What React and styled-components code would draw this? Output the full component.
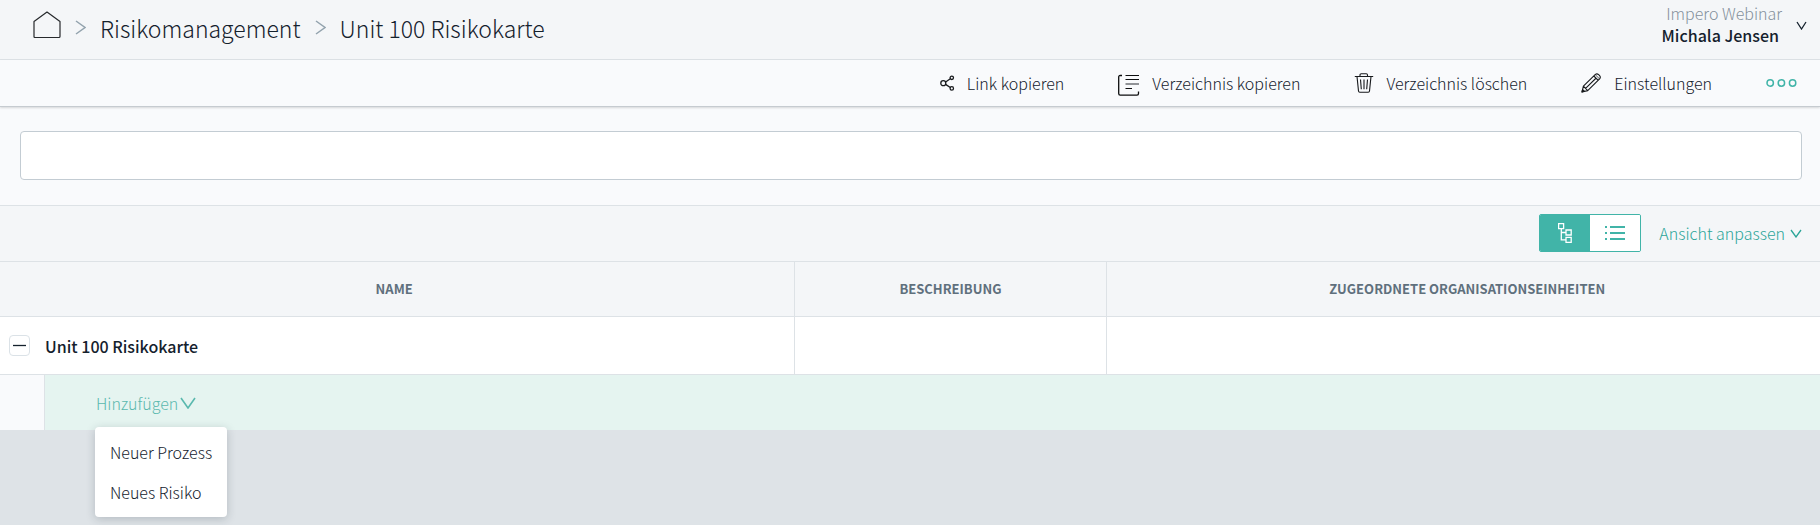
import React from "react";
import styled, { createGlobalStyle, css } from "styled-components";

const color = {
  text: "#14212d",
  muted: "#84919c",
  heading: "#5f707d",
  teal: "#41b4a8",
  tealText: "#2ba598",
  line: "#dde2e6",
  bar: "#f4f6f8",
  pale: "#f9fafc",
};

const GlobalStyle = createGlobalStyle`
  *, *::before, *::after { box-sizing: border-box; }
  body {
    margin: 0;
    min-height: 100vh;
    background: #dee3e7;
    color: ${color.text};
    font-family: "Noto Sans CJK SC", "Noto Sans", sans-serif;
    font-size: 16px;
    font-weight: 300;
    line-height: 22px;
  }
  button { font: inherit; color: inherit; background: none; border: 0; padding: 0; cursor: pointer; }
  a { color: inherit; text-decoration: none; }
  svg { display: block; flex: none; }
`;

const Header = styled.header`
  display: flex;
  align-items: center;
  justify-content: space-between;
  height: 60px;
  padding: 0 13px 0 33px;
  background: ${color.bar};
  border-bottom: 1px solid ${color.line};
`;

const Breadcrumb = styled.nav`
  display: flex;
  align-items: center;
  gap: 14px;
  padding-bottom: 4px;
  font-size: 23px;
  line-height: 32px;
`;

const UserButton = styled.button`
  display: flex;
  align-items: center;
  gap: 14px;
  padding-bottom: 12px;
  text-align: right;
`;

const UserLines = styled.span`
  display: flex;
  flex-direction: column;
`;

const Organisation = styled.span`
  color: ${color.muted};
`;

const UserName = styled.span`
  padding-right: 3px;
  font-weight: 500;
`;

const UserChevron = styled.span`
  padding-top: 4px;
`;

const Toolbar = styled.div`
  position: relative;
  display: flex;
  align-items: center;
  justify-content: flex-end;
  gap: 54px;
  height: 47px;
  padding: 0 23px 1px 0;
  background: ${color.pale};
  border-bottom: 1px solid #c6cbd0;
  box-shadow: 0 1px 2px rgba(0, 0, 0, 0.14);
`;

const ToolButton = styled.button`
  display: flex;
  align-items: center;
  gap: 12px;
`;

const SearchSection = styled.section`
  padding: 24px 18px 25px 20px;
  background: ${color.pale};
  border-bottom: 1px solid ${color.line};
`;

const SearchInput = styled.input`
  display: block;
  width: 100%;
  height: 49px;
  padding: 0 16px;
  border: 1px solid #c3ccd3;
  border-radius: 4px;
  background: #fff;
  font: inherit;
`;

const ViewBar = styled.div`
  display: flex;
  align-items: center;
  justify-content: flex-end;
  gap: 18px;
  height: 56px;
  padding: 0 18px 1px 0;
  background: ${color.bar};
  border-bottom: 1px solid ${color.line};
`;

const Toggle = styled.div`
  display: flex;
  width: 102px;
  height: 38px;
  overflow: hidden;
  border: 1px solid ${color.teal};
  border-radius: 2px;
`;

const ToggleButton = styled.button`
  display: flex;
  flex: 1;
  align-items: center;
  justify-content: center;
  color: ${(p) => (p.$active ? "#fff" : color.teal)};
  background: ${(p) => (p.$active ? color.teal : "#fff")};
`;

const TealButton = styled.button`
  display: flex;
  align-items: center;
  gap: ${(p) => p.$gap}px;
  color: ${color.tealText};
  opacity: ${(p) => (p.$faded ? 0.75 : 1)};
`;

const Table = styled.table`
  width: 100%;
  table-layout: fixed;
  border-collapse: separate;
  border-spacing: 0;
`;

const Col = styled.col`
  width: ${(p) => p.$width};
`;

const cell = css`
  border-bottom: 1px solid ${color.line};
  &:not(:last-child) { border-right: 1px solid ${color.line}; }
`;

const HeadCell = styled.th`
  ${cell}
  height: 55px;
  padding: 0;
  background: ${color.bar};
  color: ${color.heading};
  font-size: 13px;
  font-weight: 700;
  text-align: center;
  &:first-child { padding-right: 6px; }
  &:last-child { padding-left: 8px; }
`;

const Cell = styled.td`
  ${cell}
  height: 58px;
  padding: 0 9px;
  background: #fff;
`;

const NameLine = styled.div`
  display: flex;
  align-items: center;
  gap: 15px;
  font-weight: 500;
`;

const CollapseButton = styled.button`
  display: flex;
  align-items: center;
  justify-content: center;
  width: 21px;
  height: 21px;
  border: 1px solid #dbe2e7;
  border-radius: 4px;
`;

const AddCell = styled.td`
  padding: 0;
`;

const AddLine = styled.div`
  display: flex;
  height: 55px;
  background: #e5f4f0;
`;

const Indent = styled.div`
  width: 45px;
  background: ${color.pale};
  border-right: 1px solid ${color.line};
`;

const AddMenuAnchor = styled.div`
  position: relative;
  display: flex;
  align-items: center;
  margin-left: 51px;
`;

const Menu = styled.ul`
  position: absolute;
  top: 52px;
  left: -1px;
  margin: 0;
  padding: 5px 0;
  list-style: none;
  background: #fff;
  border-radius: 4px;
  box-shadow: 0 2px 10px rgba(30, 45, 60, 0.22);
`;

const MenuButton = styled.button`
  display: block;
  width: 100%;
  padding: 9px 15px;
  text-align: left;
  white-space: nowrap;
`;

function Chevron({ direction = "down", width, height, stroke = "currentColor", weight = 1.3 }) {
  const d =
    direction === "right"
      ? `M1 1 L${width - 1} ${height / 2} L1 ${height - 1}`
      : `M1 1 L${width / 2} ${height - 1} L${width - 1} 1`;
  return (
    <svg width={width} height={height} fill="none" stroke={stroke} strokeWidth={weight} aria-hidden="true">
      <path d={d} />
    </svg>
  );
}

function HomeIcon() {
  return (
    <svg width="28" height="34" viewBox="0 0 28 34" fill="none" stroke="#26292c" strokeWidth="1.2" strokeLinejoin="round" role="img" aria-label="Start">
      <path d="M1 10.5 L14 1 L27 10.5 V25.5 Q27 26.5 26 26.5 H2 Q1 26.5 1 25.5 Z" />
    </svg>
  );
}

function ShareIcon() {
  return (
    <svg width="15" height="16" viewBox="0 0 15 16" fill="none" stroke="#17191c" strokeWidth="1.3" aria-hidden="true">
      <circle cx="3.3" cy="8.2" r="2.5" />
      <circle cx="11.8" cy="2.8" r="1.7" />
      <circle cx="11.8" cy="13.4" r="1.7" />
      <path d="M5.6 7 L10.3 3.8 M5.6 9.4 L10.3 12.5" />
    </svg>
  );
}

function CopyIcon() {
  return (
    <svg width="22" height="26" viewBox="0 -4 22 26" fill="none" stroke="#0c0d0e" aria-hidden="true">
      <path d="M4 1.5 H2.2 Q.7 1.5 .7 3 V19.5 Q.7 21.2 2.2 21.2 H19 Q20.5 21.2 20.5 19.5 V17.5" strokeWidth="1.3" />
      <path d="M7.5 1.5 H21 M7.5 5.5 H21 M7.5 14.5 H14" strokeWidth="1.2" />
      <path d="M7.5 10 H21" strokeWidth="1.6" stroke="#777a7d" />
    </svg>
  );
}

function TrashIcon() {
  return (
    <svg width="20" height="20" viewBox="0 0 20 20" fill="none" stroke="#17191c" strokeWidth="1.1" aria-hidden="true">
      <path d="M.8 3.5 H19.2 M6 3.5 V2 Q6 .8 7.2 .8 H12.3 Q13.5 .8 13.5 2 V3.5 M3 3.5 L4.5 18 Q4.6 19.2 5.8 19.2 H14.2 Q15.4 19.2 15.5 18 L17 3.5 M6.5 6.5 L7.3 16.2 M10 6.5 V16.2 M13.5 6.5 L12.7 16.2" />
    </svg>
  );
}

function PencilIcon() {
  return (
    <svg width="21" height="20" viewBox="0 0 21 20" fill="none" stroke="#17191c" strokeWidth="1.1" strokeLinejoin="round" aria-hidden="true">
      <path d="M1 19 L2.4 13.2 L14.4 1.4 Q16 .2 17.6 1.6 L18.6 2.6 Q20 4.2 18.6 5.8 L6.7 17.6 Z M2.4 13.2 L6.7 17.6 M4.6 15.4 L15.2 5 M12.8 3 L17 7.2" />
      <path d="M1 19 L3.4 18.2 L1.6 16.6 Z" fill="#17191c" />
      <path d="M14.2 1.6 L18.5 5.9" strokeWidth=".7" />
    </svg>
  );
}

function MoreIcon() {
  return (
    <svg width="31" height="10" viewBox="0 0 31 10" fill="none" stroke={color.teal} strokeWidth="1.5" aria-hidden="true">
      <circle cx="4.2" cy="5" r="3.2" />
      <circle cx="15.4" cy="5" r="3.2" />
      <circle cx="26.6" cy="5" r="3.2" />
    </svg>
  );
}

function TreeIcon() {
  return (
    <svg width="14" height="20" viewBox="0 0 14 20" fill="none" stroke="currentColor" strokeWidth="1.3" aria-hidden="true">
      <path d="M.6 .6 H5.6 V5.6 H.6 Z M8 7 H13.2 V12 H8 Z M8 14.3 H13.2 V19.3 H8 Z M3.3 5.6 V16.8 H8 M3.3 9.5 H8" />
    </svg>
  );
}

function ListIcon() {
  return (
    <svg width="20" height="16" viewBox="0 0 20 16" fill="none" stroke="currentColor" strokeWidth="2" aria-hidden="true">
      <path d="M0 2 H2 M5 2 H20 M0 8 H2 M5 8 H20 M0 14 H2 M5 14 H20" />
    </svg>
  );
}

const tools = [
  { label: "Link kopieren", Icon: ShareIcon },
  { label: "Verzeichnis kopieren", Icon: CopyIcon },
  { label: "Verzeichnis löschen", Icon: TrashIcon },
  { label: "Einstellungen", Icon: PencilIcon },
];

const menuItems = ["Neuer Prozess", "Neues Risiko"];

export default function App() {
  return (
    <>
      <GlobalStyle />
      <Header>
        <Breadcrumb>
          <a href="#start"><HomeIcon /></a>
          <Chevron direction="right" width={11} height={15} stroke="#93a3ae" weight={1.5} />
          <a href="#risikomanagement">Risikomanagement</a>
          <Chevron direction="right" width={11} height={15} stroke="#93a3ae" weight={1.5} />
          <a href="#unit-100">Unit 100 Risikokarte</a>
        </Breadcrumb>
        <UserButton type="button">
          <UserLines>
            <Organisation>Impero Webinar</Organisation>
            <UserName>Michala Jensen</UserName>
          </UserLines>
          <UserChevron><Chevron width={11} height={9} /></UserChevron>
        </UserButton>
      </Header>

      <Toolbar>
        {tools.map(({ label, Icon }) => (
          <ToolButton type="button" key={label}>
            <Icon />
            {label}
          </ToolButton>
        ))}
        <ToolButton type="button" aria-label="Mehr"><MoreIcon /></ToolButton>
      </Toolbar>

      <main>
        <SearchSection>
          <SearchInput type="text" aria-label="Suche" />
        </SearchSection>

        <ViewBar>
          <Toggle>
            <ToggleButton type="button" $active aria-label="Baumansicht" aria-pressed="true"><TreeIcon /></ToggleButton>
            <ToggleButton type="button" aria-label="Listenansicht" aria-pressed="false"><ListIcon /></ToggleButton>
          </Toggle>
          <TealButton type="button" $gap={5}>
            Ansicht anpassen
            <Chevron width={12} height={9} />
          </TealButton>
        </ViewBar>

        <Table>
          <colgroup>
            <Col $width="43.7%" />
            <Col $width="17.1%" />
            <Col $width="auto" />
          </colgroup>
          <thead>
            <tr>
              <HeadCell scope="col">NAME</HeadCell>
              <HeadCell scope="col">BESCHREIBUNG</HeadCell>
              <HeadCell scope="col">ZUGEORDNETE ORGANISATIONSEINHEITEN</HeadCell>
            </tr>
          </thead>
          <tbody>
            <tr>
              <Cell>
                <NameLine>
                  <CollapseButton type="button" aria-label="Einklappen" aria-expanded="true">
                    <svg width="13" height="3" stroke={color.text} strokeWidth="1.3" aria-hidden="true">
                      <path d="M0 1.5 H13" />
                    </svg>
                  </CollapseButton>
                  Unit 100 Risikokarte
                </NameLine>
              </Cell>
              <Cell />
              <Cell />
            </tr>
            <tr>
              <AddCell colSpan={3}>
                <AddLine>
                  <Indent />
                  <AddMenuAnchor>
                    <TealButton type="button" $gap={2} $faded aria-haspopup="menu" aria-expanded="true">
                      Hinzufügen
                      <Chevron width={16} height={12} weight={1.6} />
                    </TealButton>
                    <Menu>
                      {menuItems.map((item) => (
                        <li key={item}><MenuButton type="button">{item}</MenuButton></li>
                      ))}
                    </Menu>
                  </AddMenuAnchor>
                </AddLine>
              </AddCell>
            </tr>
          </tbody>
        </Table>
      </main>
    </>
  );
}
